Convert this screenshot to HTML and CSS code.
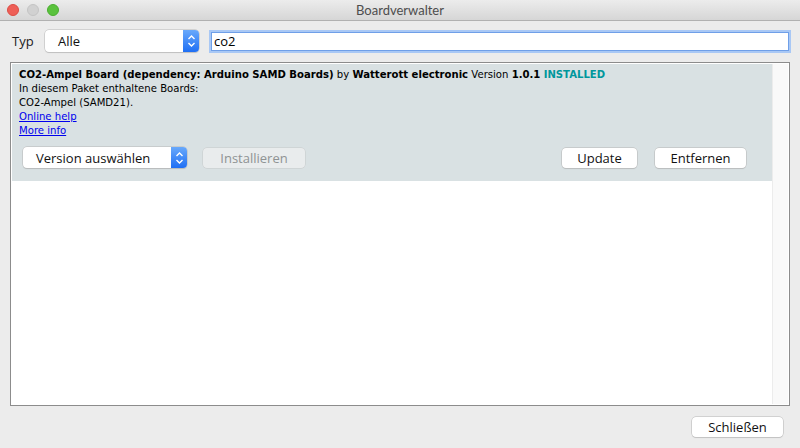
FILE: index.html
```html
<!DOCTYPE html>
<html>
<head>
<meta charset="utf-8">
<link rel="stylesheet" href="styles.css">
</head>
<body>
<div class="window">
  <div class="titlebar">
    <div class="lights">
      <span class="light red"></span>
      <span class="light gray"></span>
      <span class="light green"></span>
    </div>
    <div class="title">Boardverwalter</div>
  </div>
  <div class="toolbar">
    <span class="typ">Typ</span>
    <div class="combo combo-typ">
      <span class="combo-text">Alle</span>
      <span class="combo-arrow"><svg width="9" height="14" viewBox="0 0 9 14"><path d="M1.5 5 L4.5 2 L7.5 5 M1.5 9 L4.5 12 L7.5 9" fill="none" stroke="#fff" stroke-width="1.4"/></svg></span>
    </div>
    <div class="search">co2</div>
  </div>
  <div class="list">
    <div class="items">
      <div class="item">
        <div class="line"><b>CO2-Ampel Board (dependency: Arduino SAMD Boards)</b> by <b>Watterott electronic</b> Version <b>1.0.1</b> <b class="installed">INSTALLED</b></div>
        <div class="line">In diesem Paket enthaltene Boards:</div>
        <div class="line">CO2-Ampel (SAMD21).</div>
        <div class="line"><a href="#">Online help</a></div>
        <div class="line"><a href="#">More info</a></div>
        <div class="actions">
          <div class="combo combo-version">
            <span class="combo-text">Version auswählen</span>
            <span class="combo-arrow"><svg width="9" height="14" viewBox="0 0 9 14"><path d="M1.5 5 L4.5 2 L7.5 5 M1.5 9 L4.5 12 L7.5 9" fill="none" stroke="#fff" stroke-width="1.4"/></svg></span>
          </div>
          <div class="btn disabled btn-install">Installieren</div>
          <div class="spacer"></div>
          <div class="btn btn-update">Update</div>
          <div class="btn btn-remove">Entfernen</div>
        </div>
      </div>
    </div>
    <div class="scrollbar"></div>
  </div>
  <div class="footer">
    <div class="btn btn-close">Schließen</div>
  </div>
</div>
</body>
</html>
```
FILE: styles.css
```css
html, body {
  margin: 0;
  padding: 0;
}
body {
  width: 800px;
  height: 448px;
  background: #ececec;
  font-family: "Open Sans", "DejaVu Sans", sans-serif;
  overflow: hidden;
}
.window {
  display: flex;
  flex-direction: column;
  height: 448px;
}
.titlebar {
  height: 21px;
  box-sizing: border-box;
  background: linear-gradient(#ececec, #d6d6d6);
  border-bottom: 1px solid #b1b1b1;
  display: flex;
  align-items: center;
  position: relative;
}
.lights {
  display: flex;
  gap: 8px;
  padding-left: 7px;
}
.light {
  width: 12px;
  height: 12px;
  border-radius: 50%;
  box-sizing: border-box;
}
.red { background: #ee5f57; border: 1px solid #dc4c44; }
.gray { background: #d1d1d1; border: 1px solid #c4c4c4; }
.green { background: #5ac23d; border: 1px solid #4aae2f; }
.title {
  position: absolute;
  left: 0;
  right: 0;
  text-align: center;
  font-size: 13px;
  color: #4d4d4d;
  line-height: 20px;
  font-family: "Lato", "Open Sans", sans-serif;
}
.toolbar {
  display: flex;
  align-items: center;
  height: 20px;
  margin-top: 10px;
  padding-left: 12px;
}
.typ {
  font-size: 13px;
  color: #1a1a1a;
  width: 33px;
}
.combo {
  display: flex;
  align-items: center;
  background: #fff;
  border-radius: 4px;
  box-shadow: 0 0 0 0.5px #b8b8b8, 0 1px 1px rgba(0,0,0,0.15);
  height: 21px;
  box-sizing: border-box;
  overflow: hidden;
}
.combo-text {
  flex: 1;
  font-size: 13px;
  padding-left: 13px;
  color: #111;
}
.combo-arrow {
  width: 16px;
  height: 100%;
  background: linear-gradient(#69a9fb, #1f6ff4);
  display: flex;
  align-items: center;
  justify-content: center;
}
.combo-typ {
  width: 154px;
  height: 22px;
}
.search {
  margin-left: 12px;
  width: 578px;
  height: 19px;
  box-sizing: border-box;
  background: #fff;
  border: 1px solid #6f9fe8;
  box-shadow: 0 0 0 2px #a9c8f5;
  font-size: 13px;
  line-height: 17px;
  padding-left: 2px;
  color: #000;
}
.list {
  margin: 11px 10px 0 10px;
  height: 344px;
  box-sizing: border-box;
  border: 1px solid #8c8c8c;
  background: #fff;
  display: flex;
  padding: 1px 1px 1px 1px;
}
.items {
  flex: 1;
}
.scrollbar {
  width: 15px;
  background: #f9f9f9;
  border-left: 1px solid #ececec;
}
.item {
  background: #d9e1e3;
  padding: 4px 0 0 7px;
  height: 117px;
  box-sizing: border-box;
  font-family: "DejaVu Sans", "Verdana", sans-serif;
  font-size: 10.1px;
  color: #000;
}
.line {
  line-height: 14px;
  height: 14px;
  white-space: nowrap;
}
.installed {
  color: #00979c;
}
a {
  color: #0000ee;
  text-decoration: underline;
}
.actions {
  display: flex;
  align-items: center;
  margin-top: 9px;
  padding-left: 4px;
  padding-right: 26px;
  font-family: "Open Sans", sans-serif;
}
.combo-version {
  width: 164px;
  height: 21px;
}
.btn {
  height: 20px;
  box-sizing: border-box;
  background: #fff;
  border-radius: 4px;
  box-shadow: 0 0 0 0.5px #b5b5b5, 0 1px 1px rgba(0,0,0,0.12);
  font-size: 13px;
  line-height: 20px;
  text-align: center;
  color: #111;
  font-family: "Open Sans", sans-serif;
}
.btn.disabled {
  background: #e9eced;
  color: #8f9394;
  box-shadow: 0 0 0 0.5px #c6c9ca;
}
.btn-install {
  margin-left: 16px;
  width: 102px;
}
.spacer { flex: 1; }
.btn-update {
  width: 75px;
}
.btn-remove {
  width: 91px;
  margin-left: 18px;
}
.footer {
  display: flex;
  justify-content: flex-end;
  padding-right: 17px;
  margin-top: 11px;
}
.btn-close {
  width: 91px;
  height: 20px;
}
```
